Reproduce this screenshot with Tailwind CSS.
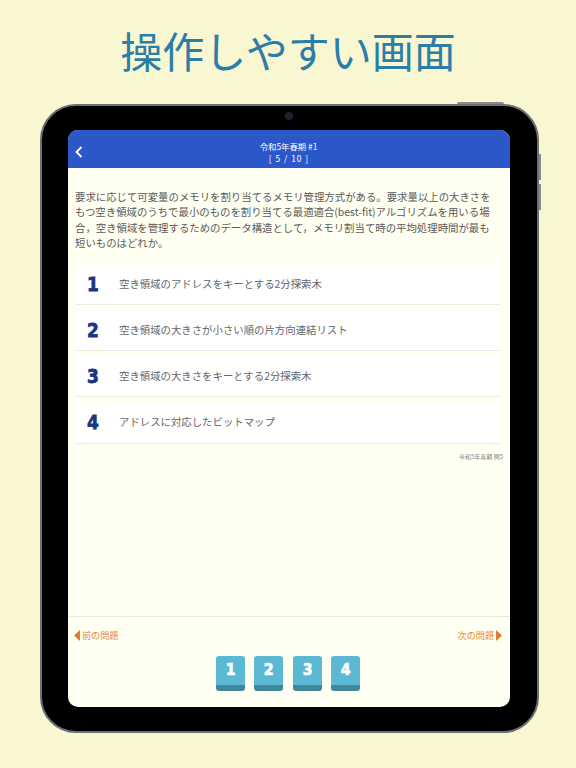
<!DOCTYPE html>
<html lang="ja">
<head>
    <meta charset="UTF-8">
    <title>操作しやすい画面</title>
    <script src="https://cdn.jsdelivr.net/npm/@tailwindcss/browser@4"></script>
</head>
<body class="w-[576px] h-[768px] overflow-hidden bg-[#f9f6d2] font-['Noto_Sans_CJK_JP',sans-serif]">
    <h1 class="h-[104px] pt-[20px] text-center text-[42px] leading-[60px] font-normal text-[#2b7ea8]">操作しやすい画面</h1>

    <!-- tablet -->
    <div class="relative ml-[40px] w-[499px] h-[629px] rounded-[36px] bg-black border-2 border-[#6d6d75] pt-[24px] pl-[26px]">
        <div class="absolute top-[-4px] left-[415px] w-[47px] h-[2px] rounded-t-sm bg-[#8a8a90]"></div>
        <div class="absolute top-[48px] right-[-4px] w-[2px] h-[26px] bg-[#8a8a90]"></div>
        <div class="absolute top-[78px] right-[-4px] w-[2px] h-[26px] bg-[#8a8a90]"></div>
        <div class="absolute top-[6px] left-[243px] w-[8px] h-[8px] rounded-full bg-[#1a2230]"></div>

        <div class="flex flex-col w-[442px] h-[577px] rounded-[10px] overflow-hidden bg-[#fffff2]">
            <div class="relative h-[38px] shrink-0 bg-[#2c57c9] text-center text-white text-[8.4px] leading-[12px] pt-[10px]">
                <svg class="absolute left-[7px] top-[16px]" width="8" height="12" viewBox="0 0 8 12" fill="none"><path d="M6.5 1 L1.5 6 L6.5 11" stroke="#fff" stroke-width="1.8"/></svg>
                <div class="mr-[1px]">令和5年春期 #1</div>
                <div class="tracking-[1px]">[ 5 / 10 ]</div>
            </div>

            <div class="flex-1 px-[7px]">
                <p class="mt-[21px] text-[10.4px] leading-[15.4px] text-[#5a5a5a]">要求に応じて可変量のメモリを割り当てるメモリ管理方式がある。要求量以上の大きさを<br>もつ空き領域のうちで最小のものを割り当てる最適適合(best-fit)アルゴリズムを用いる場<br>合，空き領域を管理するためのデータ構造として，メモリ割当て時の平均処理時間が最も<br>短いものはどれか。</p>

                <div class="mt-[13.4px] ml-px w-[424px] flex flex-col gap-[5.2px]">
                    <div class="flex items-center h-[41px] pb-[1px] bg-white border-b border-[#ecece4] pl-[11px]">
                        <span class="inline-block w-[32px] origin-left scale-x-[0.85] font-['DejaVu_Sans'] font-bold [-webkit-text-stroke:0.8px_#1c3580] text-[#1c3580] text-[20px]">1</span>
                        <span class="text-[10.4px] text-[#666666]">空き領域のアドレスをキーとする2分探索木</span>
                    </div>
                    <div class="flex items-center h-[41px] pb-[1px] bg-white border-b border-[#ecece4] pl-[11px]">
                        <span class="inline-block w-[32px] origin-left scale-x-[0.85] font-['DejaVu_Sans'] font-bold [-webkit-text-stroke:0.8px_#1c3580] text-[#1c3580] text-[20px]">2</span>
                        <span class="text-[10.4px] text-[#666666]">空き領域の大きさが小さい順の片方向連結リスト</span>
                    </div>
                    <div class="flex items-center h-[41px] pb-[1px] bg-white border-b border-[#ecece4] pl-[11px]">
                        <span class="inline-block w-[32px] origin-left scale-x-[0.85] font-['DejaVu_Sans'] font-bold [-webkit-text-stroke:0.8px_#1c3580] text-[#1c3580] text-[20px]">3</span>
                        <span class="text-[10.4px] text-[#666666]">空き領域の大きさをキーとする2分探索木</span>
                    </div>
                    <div class="flex items-center h-[41px] pb-[1px] bg-white border-b border-[#ecece4] pl-[11px]">
                        <span class="inline-block w-[32px] origin-left scale-x-[0.85] font-['DejaVu_Sans'] font-bold [-webkit-text-stroke:0.8px_#1c3580] text-[#1c3580] text-[20px]">4</span>
                        <span class="text-[10.4px] text-[#666666]">アドレスに対応したビットマップ</span>
                    </div>
                </div>
                <div class="mt-[8.5px] text-right text-[6px] leading-[10px] text-[#888888]">令和5年春期 問5</div>
            </div>

            <!-- footer -->
            <div class="h-[91px] shrink-0 border-t border-[#e8e8de] pl-[6px] pr-[8px]">
                <div class="flex justify-between pt-[11px] text-[9.1px] leading-[14px] text-[#e8873e]">
                    <span class="flex items-center gap-[2px]"><svg width="6" height="11" viewBox="0 0 6 11"><path d="M6 0 V11 L0 5.5 Z" fill="#e07a2e"/></svg>前の問題</span>
                    <span class="flex items-center gap-[2px]">次の問題<svg width="6" height="11" viewBox="0 0 6 11"><path d="M0 0 V11 L6 5.5 Z" fill="#e07a2e"/></svg></span>
                </div>
                <div class="mt-[14px] flex justify-center gap-[9.4px]">
                    <div class="w-[29px] h-[35px] rounded-[3px] bg-[#5bb9d3] border-b-[6px] border-[#428899] text-center text-white font-['DejaVu_Sans'] font-bold text-[16px] leading-[27px]"><span class="inline-block scale-x-[0.88] [-webkit-text-stroke:0.7px_#fff]">1</span></div>
                    <div class="w-[29px] h-[35px] rounded-[3px] bg-[#5bb9d3] border-b-[6px] border-[#428899] text-center text-white font-['DejaVu_Sans'] font-bold text-[16px] leading-[27px]"><span class="inline-block scale-x-[0.88] [-webkit-text-stroke:0.7px_#fff]">2</span></div>
                    <div class="w-[29px] h-[35px] rounded-[3px] bg-[#5bb9d3] border-b-[6px] border-[#428899] text-center text-white font-['DejaVu_Sans'] font-bold text-[16px] leading-[27px]"><span class="inline-block scale-x-[0.88] [-webkit-text-stroke:0.7px_#fff]">3</span></div>
                    <div class="w-[29px] h-[35px] rounded-[3px] bg-[#5bb9d3] border-b-[6px] border-[#428899] text-center text-white font-['DejaVu_Sans'] font-bold text-[16px] leading-[27px]"><span class="inline-block scale-x-[0.88] [-webkit-text-stroke:0.7px_#fff]">4</span></div>
                </div>
            </div>
        </div>
    </div>
</body>
</html>
